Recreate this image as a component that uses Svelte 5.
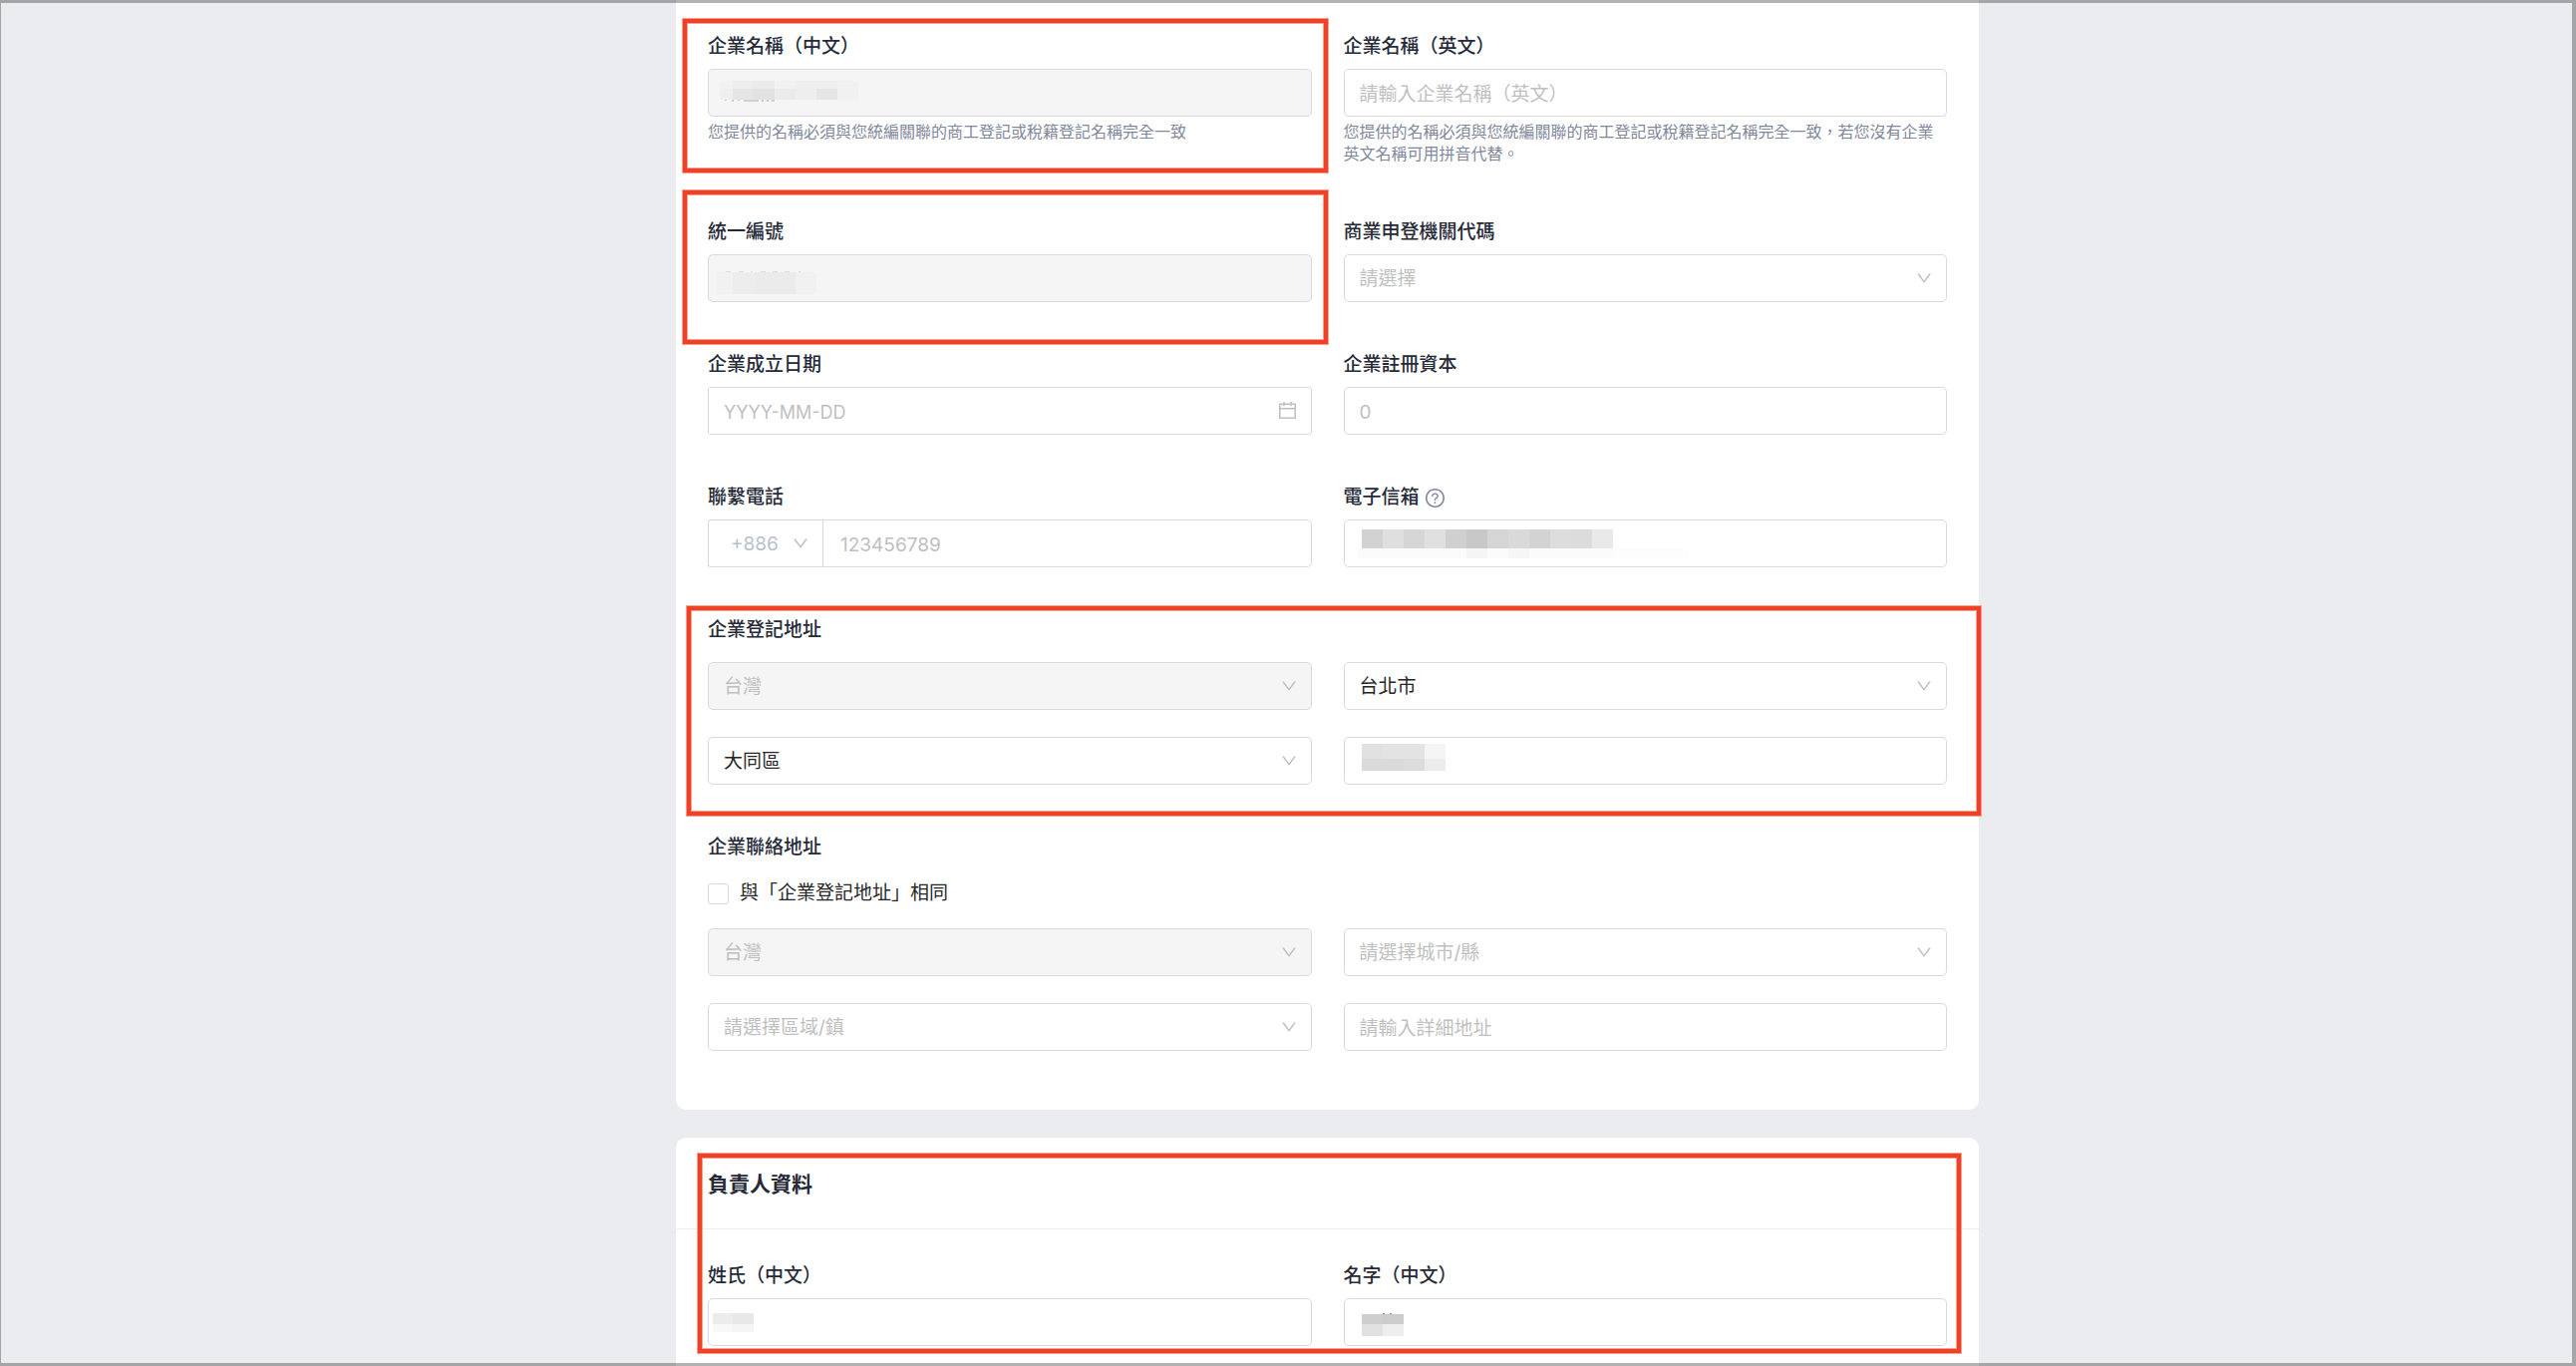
<script lang="ts">
  type Block = [x: number, y: number, w: number, h: number, fill: string];

  const emailTones = ['#d2d2d2', '#dfdfdf', '#d6d6d6', '#e0e0e0', '#d0d0d0', '#c8c8c8', '#d5d5d5', '#d9d9d9', '#d3d3d3', '#dddddd', '#dcdcdc', '#e9e9e9'];

  // privacy masks, in pixels from the corner of the control
  const masks: Record<string, Block[]> = {
    nameZh: [
      [12, 12, 13, 8, '#f2f2f2'], [25, 12, 20, 8, '#eeeeee'], [45, 12, 22, 8, '#ebebeb'],
      [67, 12, 21, 8, '#f1f1f1'], [88, 12, 42, 8, '#efefef'], [130, 12, 21, 8, '#f1f1f1'],
      [12, 20, 13, 11, '#efefef'], [25, 20, 20, 11, '#e5e5e5'], [45, 20, 22, 11, '#e2e2e2'],
      [67, 20, 21, 11, '#ebebeb'], [88, 20, 21, 11, '#eeeeee'], [109, 20, 21, 11, '#e6e6e6'],
      [130, 20, 21, 11, '#f1f1f1'],
      [17, 31, 2, 1, '#cccccc'], [24, 31, 2, 2, '#cccccc'], [30, 31, 2, 1, '#d4d4d4'],
      [36, 31, 15, 2, '#d0d0d0'], [54, 31, 2, 2, '#cccccc'], [59, 31, 2, 2, '#cccccc'],
      [64, 31, 3, 2, '#d0d0d0'],
    ],
    taxId: [
      [9, 18, 16, 22, '#f1f1f1'], [25, 18, 22, 22, '#ededed'], [47, 18, 41, 22, '#ebebeb'],
      [88, 18, 21, 22, '#f1f1f1'],
      [18, 17, 5, 1, '#dddddd'], [31, 17, 5, 1, '#dddddd'], [43, 17, 2, 1, '#dddddd'],
      [53, 17, 5, 1, '#dddddd'], [65, 17, 5, 1, '#dddddd'], [77, 17, 5, 1, '#dddddd'],
      [91, 17, 2, 1, '#dddddd'],
    ],
    email: [
      ...emailTones.map((fill, i): Block => [18 + i * 21, 10, 21, 19, fill]),
      [14, 29, 256, 10, '#fbfbfb'], [123, 29, 21, 10, '#f5f5f5'], [165, 29, 21, 10, '#f6f6f6'],
      [270, 29, 75, 10, '#fdfdfd'],
    ],
    address: [
      [18, 7, 21, 15, '#e1e1e1'], [39, 7, 42, 15, '#e3e3e3'], [81, 7, 21, 15, '#f5f5f5'],
      [18, 22, 42, 12, '#dadada'], [60, 22, 21, 12, '#dcdcdc'], [81, 22, 21, 12, '#ececec'],
    ],
    lastName: [
      [5, 15, 20, 11, '#ececec'], [25, 15, 21, 11, '#e8e8e8'],
      [5, 26, 20, 8, '#f8f8f8'], [25, 26, 21, 8, '#f5f5f5'],
    ],
    firstName: [
      [18, 16, 21, 10, '#cecece'], [39, 16, 21, 10, '#cccccc'],
      [18, 26, 21, 12, '#e1e1e1'], [39, 26, 21, 12, '#eeeeee'],
      [39, 15, 2, 1, '#888888'], [46, 15, 2, 1, '#888888'],
    ],
  };
</script>

{#snippet mask(key: string)}
  <svg class="mask" width="350" height="46" aria-hidden="true">
    {#each masks[key] as [x, y, w, h, fill]}
      <rect {x} {y} width={w} height={h} {fill} />
    {/each}
  </svg>
{/snippet}

{#snippet arrow()}
  <svg class="arrow" viewBox="64 64 896 896" aria-hidden="true">
    <path d="M884 256h-75c-5.1 0-9.9 2.5-12.9 6.6L512 654.2 227.9 262.6c-3-4.1-7.8-6.6-12.9-6.6h-75c-6.5 0-10.3 7.4-6.5 12.7l352.6 486.1c12.8 17.6 39 17.6 51.7 0l352.6-486.1c3.9-5.3.1-12.7-6.4-12.7z" />
  </svg>
{/snippet}

{#snippet picker(label: string, text: string, kind: string)}
  <div class="control">
    <select class={kind} aria-label={label} disabled={kind === 'off'}>
      <option>{text}</option>
    </select>
    {@render arrow()}
  </div>
{/snippet}

<main class="page">
  <section class="card company">
    <div class="grid">
      <div class="field">
        <label for="name-zh">企業名稱（中文）</label>
        <div class="control">
          <input id="name-zh" type="text" disabled />
          {@render mask('nameZh')}
        </div>
        <p class="help">您提供的名稱必須與您統編關聯的商工登記或稅籍登記名稱完全一致</p>
        <span class="mark mark-name"></span>
      </div>
      <div class="field">
        <label for="name-en">企業名稱（英文）</label>
        <div class="control">
          <input id="name-en" type="text" placeholder="請輸入企業名稱（英文）" />
        </div>
        <p class="help">您提供的名稱必須與您統編關聯的商工登記或稅籍登記名稱完全一致，若您沒有企業英文名稱可用拼音代替。</p>
      </div>

      <div class="field">
        <label for="tax-id">統一編號</label>
        <div class="control">
          <input id="tax-id" type="text" disabled />
          {@render mask('taxId')}
        </div>
        <span class="mark mark-tax"></span>
      </div>
      <div class="field">
        <label for="agency">商業申登機關代碼</label>
        <div class="control">
          <select id="agency" class="empty">
            <option>請選擇</option>
          </select>
          {@render arrow()}
        </div>
      </div>

      <div class="field">
        <label for="founded">企業成立日期</label>
        <div class="control">
          <input id="founded" class="date" type="text" placeholder="YYYY-MM-DD" />
          <svg class="calendar" viewBox="64 64 896 896" aria-hidden="true">
            <path d="M880 184H712v-64c0-4.4-3.6-8-8-8h-56c-4.4 0-8 3.6-8 8v64H384v-64c0-4.4-3.6-8-8-8h-56c-4.4 0-8 3.6-8 8v64H144c-17.7 0-32 14.3-32 32v664c0 17.7 14.3 32 32 32h736c17.7 0 32-14.3 32-32V216c0-17.7-14.3-32-32-32zm-40 656H184V460h656v380zM184 392V256h128v48c0 4.4 3.6 8 8 8h56c4.4 0 8-3.6 8-8v-48h256v48c0 4.4 3.6 8 8 8h56c4.4 0 8-3.6 8-8v-48h128v136H184z" />
          </svg>
        </div>
      </div>
      <div class="field">
        <label for="capital">企業註冊資本</label>
        <div class="control">
          <input id="capital" type="text" placeholder="0" />
        </div>
      </div>

      <div class="field">
        <label for="phone">聯繫電話</label>
        <div class="phone">
          <div class="control code">
            <select aria-label="國碼">
              <option>+886</option>
            </select>
            {@render arrow()}
          </div>
          <input id="phone" type="tel" placeholder="123456789" />
        </div>
      </div>
      <div class="field">
        <label for="email">
          電子信箱
          <svg class="question" viewBox="64 64 896 896" aria-hidden="true">
            <path d="M512 64C264.6 64 64 264.6 64 512s200.6 448 448 448 448-200.6 448-448S759.4 64 512 64zm0 820c-205.4 0-372-166.6-372-372s166.6-372 372-372 372 166.6 372 372-166.6 372-372 372z" />
            <path d="M623.6 316.7C593.6 290.4 554 276 512 276s-81.6 14.5-111.6 40.7C369.2 344 352 380.7 352 420v7.6c0 4.4 3.6 8 8 8h48c4.4 0 8-3.6 8-8V420c0-44.1 43.1-80 96-80s96 35.9 96 80c0 31.1-22 59.6-56.1 72.7-21.2 8.1-39.2 22.3-52.1 40.9-13.1 19-19.9 41.8-19.9 64.9V620c0 4.4 3.6 8 8 8h48c4.4 0 8-3.6 8-8v-22.7a48.3 48.3 0 0130.9-44.8c59-22.7 97.1-74.7 97.1-132.5.1-39.3-17.1-76-48.3-103.3zM472 732a40 40 0 1080 0 40 40 0 10-80 0z" />
          </svg>
        </label>
        <div class="control">
          <input id="email" type="email" />
          {@render mask('email')}
        </div>
      </div>
    </div>

    <fieldset>
      <legend>企業登記地址</legend>
      <div class="grid address registered">
        {@render picker('登記國家', '台灣', 'off')}
        {@render picker('登記城市/縣', '台北市', 'filled')}
        {@render picker('登記區域/鎮', '大同區', 'filled')}
        <div class="control">
          <input type="text" aria-label="登記詳細地址" />
          {@render mask('address')}
        </div>
        <span class="mark mark-address"></span>
      </div>
    </fieldset>

    <fieldset>
      <legend>企業聯絡地址</legend>
      <label class="same">
        <input type="checkbox" />
        與「企業登記地址」相同
      </label>
      <div class="grid address">
        {@render picker('聯絡國家', '台灣', 'off')}
        {@render picker('聯絡城市/縣', '請選擇城市/縣', 'empty')}
        {@render picker('聯絡區域/鎮', '請選擇區域/鎮', 'empty')}
        <div class="control">
          <input type="text" aria-label="聯絡詳細地址" placeholder="請輸入詳細地址" />
        </div>
      </div>
    </fieldset>
  </section>

  <section class="card owner">
    <h2>負責人資料</h2>
    <div class="grid owner-body">
      <div class="field">
        <label for="last-name">姓氏（中文）</label>
        <div class="control">
          <input id="last-name" type="text" />
          {@render mask('lastName')}
        </div>
      </div>
      <div class="field">
        <label for="first-name">名字（中文）</label>
        <div class="control">
          <input id="first-name" type="text" />
          {@render mask('firstName')}
        </div>
      </div>
    </div>
    <span class="mark mark-owner"></span>
  </section>
</main>

<style>
  :global(body) { background: #ebecf0; }

  .page {
    box-sizing: border-box;
    min-height: 100vh;
    padding-left: 79px;
    display: flex;
    flex-direction: column;
    align-items: center;
    gap: 28px;
    font-family: Inter, 'Noto Sans CJK TC', sans-serif;
    font-size: 19px;
    line-height: 24px;
    color: #262a38;
  }
  /* window frame drawn over the page edges */
  .page::after {
    content: '';
    position: fixed;
    inset: 0;
    border: solid rgba(0, 0, 0, 0.3);
    border-width: 3px 4px 3px 1px;
    pointer-events: none;
  }
  .card {
    box-sizing: border-box;
    position: relative;
    width: 100%;
    max-width: 1307px;
    background: #fff;
  }
  .company { padding: 35px 32px 59px; border-radius: 0 0 10px 10px; }
  .owner { flex: 1; border-radius: 10px 10px 0 0; }
  .owner h2 {
    margin: 0;
    padding: 35px 32px 32px;
    border-bottom: 1px solid #ededf0;
    font-size: 21px;
    line-height: 24px;
    font-weight: 600;
  }
  .owner-body { padding: 35px 32px 20px; }

  .grid { display: grid; grid-template-columns: 1fr 1fr; gap: 51px 32px; }
  .address { position: relative; row-gap: 27px; }
  .registered { margin-top: 20px; }
  .field { position: relative; min-width: 0; }
  .field label { display: flex; align-items: center; gap: 6px; margin-bottom: 10px; font-weight: 500; }
  .help { margin: 4px 0 5px; font-size: 16px; line-height: 22px; color: #7f889c; }

  fieldset { min-width: 0; margin: 51px 0 0; padding: 0; border: 0; }
  legend { display: block; padding: 0; font-weight: 500; }

  .control { position: relative; }
  input, select {
    box-sizing: border-box;
    display: block;
    width: 100%;
    height: 48px;
    margin: 0;
    padding: 2px 15px 0;
    border: 1px solid #d9d9e6;
    border-radius: 5px;
    background: #fff;
    font: inherit;
    color: #262626;
    appearance: none;
  }
  input::placeholder { color: #bfbfbf; opacity: 1; }
  input:disabled, select:disabled { background: #f5f5f5; opacity: 1; }
  select.off, select.empty { color: #bfbfbf; }
  .date { border-color: #d9d9d9; border-radius: 3px; font-size: 18px; }

  .arrow {
    position: absolute;
    top: 16px;
    right: 15px;
    width: 16px;
    height: 16px;
    fill: #bfbfbf;
    pointer-events: none;
  }
  .calendar { position: absolute; top: 14px; right: 15px; width: 19px; height: 19px; fill: #bfbfbf; }
  .question { width: 19px; height: 19px; fill: #7f889c; }
  .mask { position: absolute; top: 0; left: 0; pointer-events: none; }

  .phone { display: flex; }
  .phone .code { flex: none; width: 115px; }
  .code select { padding-left: 22px; border-color: #d9d9d9; border-right: 0; border-radius: 3px 0 0 3px; color: #b8c0d0; }
  .code .arrow { right: 14px; }
  .phone input { flex: 1; min-width: 0; padding-left: 17px; border-radius: 0 5px 5px 0; }

  .same { display: flex; align-items: center; gap: 11px; margin: 22px 0 23px; color: #262626; }
  .same input { flex: none; width: 21px; height: 21px; padding: 0; border-color: #d9d9d9; border-radius: 3px; }

  .mark {
    position: absolute;
    border: 4px solid #ee4126;
    box-shadow: 0 0 0 1px #f69f8f, inset 0 0 0 1px #f69f8f;
    pointer-events: none;
  }
  .mark-name { inset: -16px -16px -3px -25px; }
  .mark-tax { inset: -30px -16px -42px -25px; }
  .mark-address { inset: -56px -34px -31px -21px; }
  .mark-owner { inset: 16px 18px 13px 22px; }
</style>
